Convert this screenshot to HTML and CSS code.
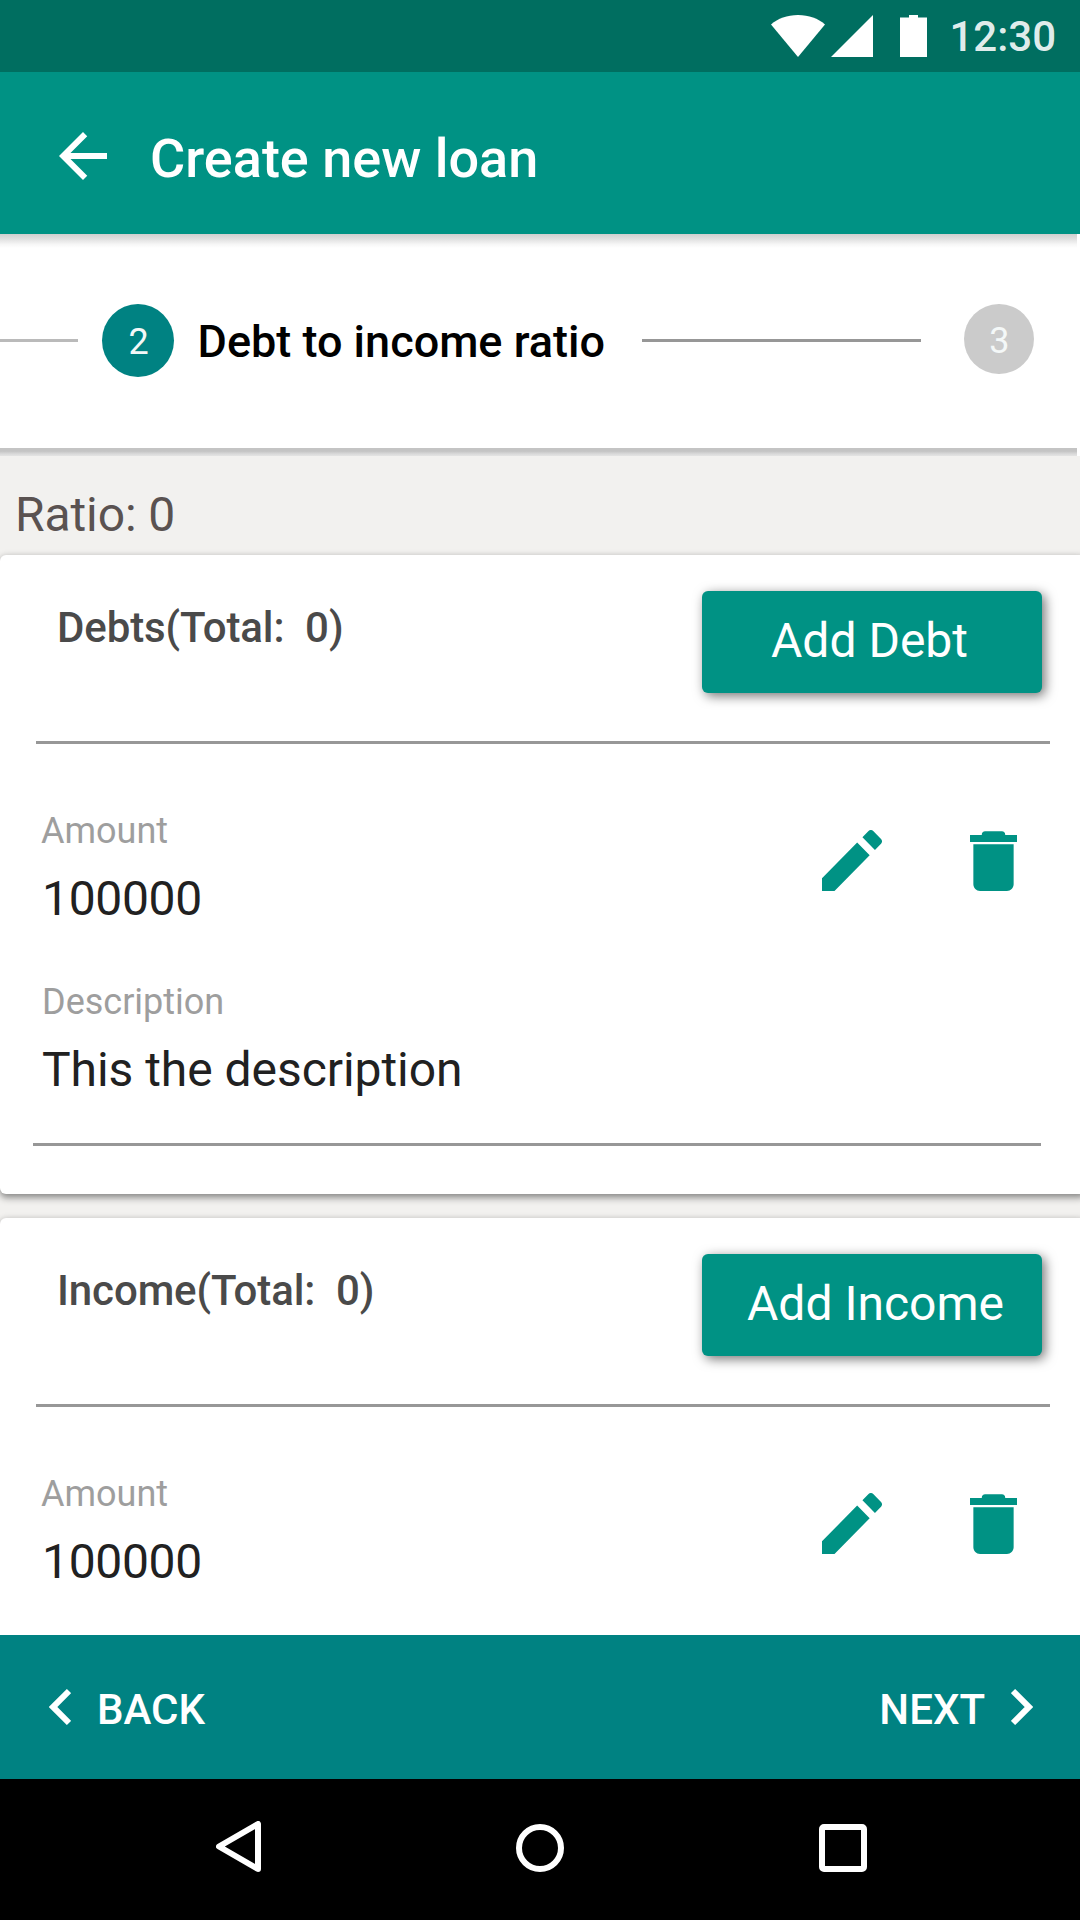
FILE: index.html
```
<!DOCTYPE html>
<html lang="en">
<head>
<meta charset="utf-8">
<title>Create new loan</title>
<link rel="stylesheet" href="styles.css">
</head>
<body>
<svg class="defs" width="0" height="0">
  <symbol id="edit" viewBox="3 3 18 18" preserveAspectRatio="none"><path d="M3 17.25V21h3.75L17.3 10.450l-3.750-3.750L3 17.25zM20.71 7.04c.39-.39.39-1.02 0-1.41l-2.34-2.34c-.39-.39-1.02-.39-1.41 0l-1.83 1.83 3.75 3.75 1.83-1.83z"/></symbol>
  <symbol id="trash" viewBox="5 3 14 18" preserveAspectRatio="none"><path d="M6 19c0 1.1.9 2 2 2h8c1.1 0 2-.9 2-2V7H6v12zM19 4.200h-3.500c0-.7-.4-1.100-1-1.100h-5c-.6 0-1 .4-1 1.100H5v2.100h14V4.200z"/></symbol>
</svg>
<div class="screen">
  <header class="status">
    <svg class="wifi" width="54" height="42" viewBox="0 0 54 42"><path d="M27 42L0 9.500C7 3.500 16 0 27 0s20 3.500 27 9.500z"/></svg>
    <svg class="signal" width="42" height="42" viewBox="0 0 42 42"><path d="M0 42H42V0z"/></svg>
    <svg class="battery" width="27" height="42" viewBox="0 0 27 42"><path d="M0 2.500H9V0h9v2.500h9V42H0z"/></svg>
    <span class="time">12:30</span>
  </header>
  <div class="appbar">
    <svg class="arrow" width="72" height="72" viewBox="0 0 24 24"><path d="M20 11H7.830l5.590-5.590L12 4l-8 8 8 8 1.410-1.410L7.830 13H20v-2z"/></svg>
    <h1 class="title">Create new loan</h1>
  </div>
  <div class="stepper">
    <span class="line line-prev"></span>
    <span class="step step-active">2</span>
    <span class="step-label">Debt to income ratio</span>
    <span class="line line-next"></span>
    <span class="step step-idle">3</span>
  </div>
  <main class="content">
    <p class="ratio">Ratio: 0</p>
    <section class="card">
      <div class="card-head">
        <h2 class="card-title">Debts(Total:  0)</h2>
        <button class="add">Add Debt</button>
      </div>
      <div class="rule"></div>
      <div class="entry">
        <div class="fields">
          <div class="label">Amount</div>
          <div class="value amount">100000</div>
          <div class="label label-desc">Description</div>
          <div class="value">This the description</div>
        </div>
        <svg class="edit" width="60" height="61"><use href="#edit"/></svg>
        <svg class="trash" width="47" height="60"><use href="#trash"/></svg>
      </div>
      <div class="rule rule-end"></div>
    </section>
    <section class="card">
      <div class="card-head">
        <h2 class="card-title">Income(Total:  0)</h2>
        <button class="add add-income">Add Income</button>
      </div>
      <div class="rule"></div>
      <div class="entry">
        <div class="fields">
          <div class="label">Amount</div>
          <div class="value amount">100000</div>
        </div>
        <svg class="edit" width="60" height="61"><use href="#edit"/></svg>
        <svg class="trash" width="47" height="60"><use href="#trash"/></svg>
      </div>
    </section>
  </main>
  <footer class="pager">
    <div class="pager-item">
      <svg width="22" height="36" viewBox="0 0 22 36"><path class="chevron" d="M20 2.100L4 18l16 15.900"/></svg>
      <span class="back">BACK</span>
    </div>
    <div class="pager-item">
      <span class="next">NEXT</span>
      <svg width="22" height="36" viewBox="0 0 22 36"><path class="chevron" d="M2 2.100L18 18 2 33.900"/></svg>
    </div>
  </footer>
  <nav class="navbar">
    <svg class="nav-back" width="45" height="51" viewBox="0 0 45 51"><path d="M42 3V48L3 25.500z"/></svg>
    <svg class="nav-home" width="48" height="48" viewBox="0 0 48 48"><circle cx="24" cy="24" r="21"/></svg>
    <svg class="nav-recent" width="48" height="48" viewBox="0 0 48 48"><rect x="3" y="3" width="42" height="42" rx="2"/></svg>
  </nav>
</div>
</body>
</html>
```
FILE: styles.css
```
* { box-sizing: border-box; }

body, h1, h2, p { margin: 0; }

body {
  font-family: Roboto, "Liberation Sans", sans-serif;
  background: #fff;
}

.defs { display: block; height: 0; }

.screen {
  width: 1080px;
  height: 1920px;
  display: flex;
  flex-direction: column;
  overflow: hidden;
}

.status {
  flex: none;
  height: 72px;
  background: #006e60;
  display: flex;
  align-items: center;
  justify-content: flex-end;
  padding-right: 24px;
  fill: #fff;
}
.signal { margin-left: 6px; }
.battery { margin: 0 22px 0 27px; }
.time {
  font-size: 42px;
  line-height: 50px;
  padding-top: 2px;
  font-weight: 500;
  color: rgba(255, 255, 255, .9);
}

.appbar {
  flex: none;
  height: 162px;
  background: #009284;
  display: flex;
  align-items: flex-start;
  padding: 48px 0 0 47px;
}
.arrow { fill: #fff; }
.title {
  margin: 9px 0 0 31px;
  font-size: 54px;
  line-height: 60px;
  font-weight: 500;
  color: #fff;
}

/* The app bar's shadow falls on the top edge, the stepper's own on the bottom; both stop 3px short of the right side. */
.stepper {
  flex: none;
  height: 222px;
  background:
    linear-gradient(#cfcfcf, #e0e0e0 35%, #f7f7f7 75%, #fff) 0 0 / 1077px 14px no-repeat,
    linear-gradient(#c4c4c4, #c4c4c4 40%, #dadada 75%, #e4e4e3) 0 100% / 1077px 8px no-repeat,
    #fff;
  display: flex;
  align-items: flex-start;
  padding-top: 70px;
}
.line { height: 3px; margin-top: 35px; background: #979797; }
.line-prev { width: 78px; background: #bababa; }
.line-next { width: 279px; margin-left: auto; }
.step {
  border-radius: 50%;
  text-align: center;
  font-size: 36px;
  color: #f4f8f8;
}
.step-active {
  width: 72px;
  height: 73px;
  line-height: 76px;
  margin-left: 23.500px;
  padding-left: 2px;
  background: #008282;
}
.step-idle {
  width: 69.500px;
  height: 70px;
  line-height: 74px;
  margin: 0 46.500px 0 43px;
  padding-left: 1px;
  background: #cbcbcb;
}
.step-label {
  margin: 10px 0 0 24px;
  font-size: 45px;
  line-height: 56px;
  font-weight: 500;
  color: #000;
}

.content {
  flex: 1;
  min-height: 0;
  background: #f2f1ef;
  display: flex;
  flex-direction: column;
  gap: 24px;
  overflow: hidden;
}
.ratio {
  flex: none;
  height: 75px;
  padding: 31px 0 0 15px;
  font-size: 48px;
  line-height: 56px;
  letter-spacing: -.1px;
  color: #5a5251;
}

.card {
  flex: none;
  height: 639px;
  margin-right: -6px;
  background: #fff;
  border-radius: 6px;
  box-shadow: 0 0 6px rgba(0, 0, 0, .12), 0 4px 7px rgba(0, 0, 0, .38);
}
.card-head {
  height: 186px;
  display: flex;
  align-items: flex-start;
  justify-content: space-between;
  padding: 36px 44px 0 57px;
}
.card-title {
  margin-top: 12px;
  font-size: 42px;
  line-height: 50px;
  font-weight: 500;
  letter-spacing: -.1px;
  color: #4a4a4a;
  white-space: pre;
}
.add {
  width: 340px;
  height: 102px;
  border: 0;
  border-radius: 6px;
  padding: 0 5px 3px 0;
  background: #009284;
  box-shadow: 3px 3px 12px rgba(0, 0, 0, .55);
  font: 400 48px/56px Roboto, "Liberation Sans", sans-serif;
  color: #fff;
}
.add-income { padding-left: 12px; }

.rule { height: 3px; margin: 0 36px; background: #979797; }
.rule-end { margin: 45px 45px 0 33px; }

.entry {
  display: flex;
  align-items: flex-start;
  padding: 66px 69.500px 0 41px;
  fill: #009284;
}
.fields { flex: 1; }
.label { font-size: 36px; line-height: 42px; color: #9e9e9e; }
.label-desc { margin-top: 54px; padding-left: 1px; }
.value {
  margin-top: 19px;
  padding-left: 1px;
  font-size: 48px;
  line-height: 56px;
  letter-spacing: -.05px;
  color: #212121;
}
.amount { letter-spacing: -.35px; }
.edit { margin: 20px 87.500px 0 0; }
.trash { margin-top: 21px; }

.pager {
  flex: none;
  height: 144px;
  background: #008282;
  display: flex;
  justify-content: space-between;
  align-items: center;
  padding: 0 47px 0 49px;
}
.pager-item { display: flex; align-items: center; }
.pager-item span {
  font-size: 42px;
  line-height: 50px;
  font-weight: 500;
  color: #fff;
  padding-top: 6px;
}
.back { margin-left: 26px; }
.next { margin-right: 26px; }
.chevron { fill: none; stroke: #fff; stroke-width: 6; }

.navbar {
  flex: none;
  height: 141px;
  background: #000;
  display: flex;
  align-items: flex-start;
  padding: 42px 213px 0 216px;
  justify-content: space-between;
  fill: none;
  stroke: #fff;
  stroke-width: 6;
  stroke-linejoin: round;
}
.nav-home, .nav-recent { margin-top: 3px; }
```
